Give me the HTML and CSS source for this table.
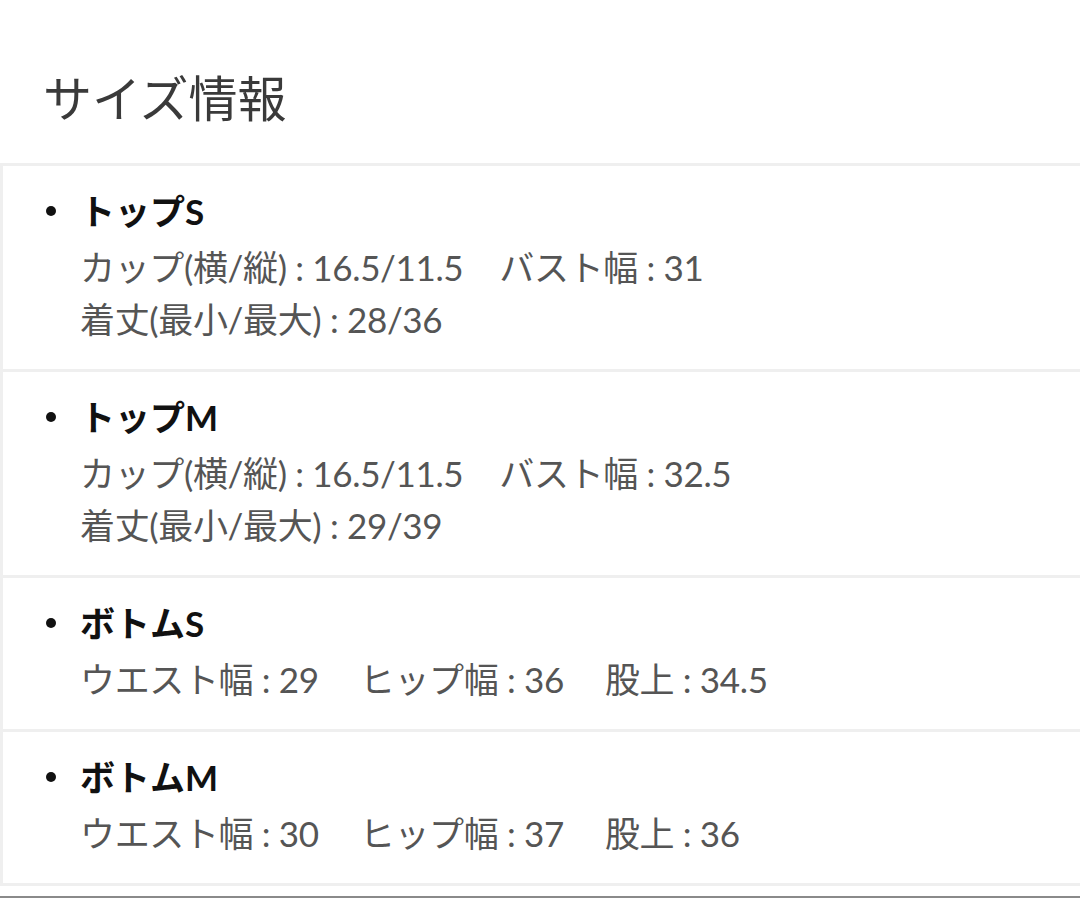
FILE: index.html
```html
<!DOCTYPE html>
<html lang="ja">
<head>
<meta charset="utf-8">
<link rel="stylesheet" href="styles.css">
</head>
<body>
<div class="page">
  <h2 class="title">サイズ情報</h2>
  <div class="list">
    <div class="row">
      <div class="head"><span class="dot"></span>トップS</div>
      <div class="line">カップ(横/縦) : 16.5/11.5<span class="sp"></span>バスト幅 : 31</div>
      <div class="line">着丈(最小/最大) : 28/36</div>
    </div>
    <div class="row">
      <div class="head"><span class="dot"></span>トップM</div>
      <div class="line">カップ(横/縦) : 16.5/11.5<span class="sp"></span>バスト幅 : 32.5</div>
      <div class="line">着丈(最小/最大) : 29/39</div>
    </div>
    <div class="row">
      <div class="head"><span class="dot"></span>ボトムS</div>
      <div class="line">ウエスト幅 : 29<span class="sp wide"></span>ヒップ幅 : 36<span class="sp wide"></span>股上 : 34.5</div>
    </div>
    <div class="row">
      <div class="head"><span class="dot"></span>ボトムM</div>
      <div class="line">ウエスト幅 : 30<span class="sp wide"></span>ヒップ幅 : 37<span class="sp wide"></span>股上 : 36</div>
    </div>
  </div>
</div>
</body>
</html>
```

FILE: styles.css
```css
html, body {
  margin: 0;
  padding: 0;
  background: #fff;
}
body {
  font-family: "Lato", "Noto Sans CJK JP", sans-serif;
  width: 1080px;
  height: 898px;
  overflow: hidden;
  border-bottom: 2px solid #8a8a8a;
  box-sizing: border-box;
}
.page {
  padding-top: 63px;
}
.title {
  margin: 0 0 34px 43px;
  font-family: "Noto Sans CJK JP", sans-serif;
  font-weight: 400;
  font-size: 49px;
  line-height: 66px;
  color: #3a3a3a;
}
.list {
  border-top: 3px solid #efefef;
  border-left: 3px solid #efefef;
}
.row {
  padding: 20px 0 24px 77px;
  border-bottom: 3px solid #efefef;
}
.head {
  position: relative;
  font-weight: 700;
  font-size: 35px;
  line-height: 50px;
  color: #111;
  margin-bottom: 5px;
}
.dot {
  position: absolute;
  left: -34px;
  top: 20px;
  width: 10px;
  height: 10px;
  border-radius: 50%;
  background: #111;
}
.line {
  font-size: 35px;
  line-height: 52px;
  color: #555;
  letter-spacing: -0.35px;
}
.sp {
  display: inline-block;
  width: 36px;
}
.sp.wide {
  width: 41px;
}
```
